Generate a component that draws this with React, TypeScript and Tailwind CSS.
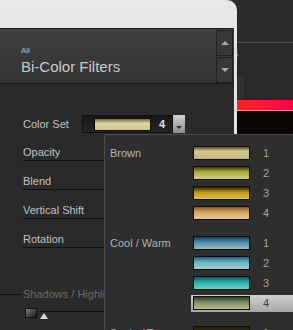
import { ReactNode } from "react";

// swatch gradients, one class string per colour set
const brown = [
  "bg-[linear-gradient(to_bottom,#5e4e28,#d6c894_35%,#c2b27e)]",
  "bg-[linear-gradient(to_bottom,#3e3e08,#a8a83a_40%,#d2d28c)]",
  "bg-[linear-gradient(to_bottom,#2e2000,#c29a18_45%,#d8c24a)]",
  "bg-[linear-gradient(to_bottom,#8a5a28,#d8a866_45%,#e6cc92)]",
];

const coolWarm = [
  "bg-[linear-gradient(to_bottom,#123e5c,#4e8eae_45%,#9cbcbc)]",
  "bg-[linear-gradient(to_bottom,#1e5e74,#6ab6c4_45%,#a6cccc)]",
  "bg-[linear-gradient(to_bottom,#065a5c,#2aaeae_45%,#6ecebe)]",
  "bg-[linear-gradient(to_bottom,#2e3a2e,#7e8e66_45%,#b6be8e)]",
];

const sepia = ["bg-[linear-gradient(to_bottom,#1e1e08,#4a4a1a)]"];

interface GroupProps {
  label: string;
  swatches: string[];
  selected?: number;
}

function Group({ label, swatches, selected }: GroupProps) {
  return (
    <div className="flex mb-[10px]">
      <div className="w-[86px] shrink-0 pl-[5px] pt-px text-[11px] leading-[14px] text-[#b4b4b4] whitespace-nowrap">
        {label}
      </div>
      <div className="flex-1 flex flex-col">
        {swatches.map((sw, i) => {
          const sel = selected === i;
          return (
            <div
              key={i}
              className={
                sel
                  ? "h-[17px] pt-px pl-[2px] mb-[3px] flex items-start bg-gradient-to-b from-[#d0d0d0] to-[#a6a6a6]"
                  : "h-[17px] pt-px pl-[2px] mb-[3px] flex items-start"
              }
            >
              <div className={`w-[57px] h-[14px] border border-[#0c0c0c] ${sw}`} />
              <span
                className={
                  sel
                    ? "ml-[13px] text-[11px] leading-[14px] text-[#3a3a3a]"
                    : "ml-[13px] text-[11px] leading-[14px] text-[#a8a8a8]"
                }
              >
                {i + 1}
              </span>
            </div>
          );
        })}
      </div>
    </div>
  );
}

function Row({ label, h, children }: { label: string; h: string; children?: ReactNode }) {
  return (
    <div className={`ml-[23px] w-[187px] ${h} border-b border-[#121212] flex items-end pb-px`}>
      <span className="text-[11px] leading-[14px] text-[#c2c2c2]">{label}</span>
      {children}
    </div>
  );
}

export default function App() {
  return (
    <div className="w-[293px] h-[330px] relative overflow-hidden bg-[#2b2b2b] flex font-['Liberation_Sans',Arial,sans-serif]">
      {/* left panel */}
      <div className="w-[237px] shrink-0 relative z-10 bg-gradient-to-b from-[#e8e8e8] to-[#d8d8d8] rounded-tr-[10px] pt-[28px] pr-[3px] flex flex-col">
        <div className="flex-1 bg-[#2a2a2a] flex flex-col">
          <div className="h-[56px] border-y border-[#1a1a1a] bg-gradient-to-b from-[#3f3f3f] to-[#343434] flex">
            <div className="flex-1 pl-[21px] pt-[17px] flex flex-col gap-[2px]">
              <span className="text-[8px] leading-[10px] text-[#bdbdbd]">All</span>
              <span className="text-[15px] leading-[17px] text-[#cacaca]">
                Bi-Color Filters
              </span>
            </div>
            <div className="w-[17px] mr-px pt-px flex flex-col gap-px">
              <div className="h-[26px] bg-[#373737] border border-[#202020] flex items-center justify-center">
                <div className="w-0 h-0 border-x-[4px] border-x-transparent border-b-[4px] border-b-[#a8a8a8]" />
              </div>
              <div className="h-[26px] bg-[#373737] border border-[#202020] flex items-center justify-center">
                <div className="w-0 h-0 border-x-[4px] border-x-transparent border-t-[4px] border-t-[#a8a8a8]" />
              </div>
            </div>
          </div>

          <div className="flex-1 pt-[31px] flex flex-col">
            <div className="h-[18px] flex items-center">
              <span className="w-[82px] pl-[23px] text-[11px] leading-[14px] text-[#c2c2c2]">
                Color Set
              </span>
              <div className="w-[91px] h-[18px] border border-[#101010] bg-gradient-to-b from-[#161616] to-[#262626] flex items-center">
                <div className="ml-[11px] w-[57px] h-[13px] border border-[#0c0c0c] bg-[linear-gradient(to_bottom,#7a6a38,#dcd4a2_40%,#cfc690)]" />
                <span className="ml-[8px] text-[11px] font-bold text-[#e2e2e2]">4</span>
              </div>
              <div className="w-[12px] h-[18px] bg-gradient-to-b from-[#cfcfcf] to-[#8e8e8e] flex items-end justify-center pb-[4px]">
                <div className="w-0 h-0 border-x-[3px] border-x-transparent border-t-[3px] border-t-[#303030]" />
              </div>
            </div>
            <Row label="Opacity" h="h-[28px]" />
            <Row label="Blend" h="h-[29px]" />
            <Row label="Vertical Shift" h="h-[29px]" />
            <Row label="Rotation" h="h-[29px]" />

            <div className="mt-[39px] flex items-center">
              <div className="w-[22px] h-px bg-[#111111]" />
              <span className="ml-px text-[11px] leading-[14px] text-[#6c6c6c] whitespace-nowrap">
                Shadows / Highlights
              </span>
            </div>
            <div className="mt-[7px] ml-[25px] flex items-start">
              <div className="w-[12px] h-[10px] border border-[#0e0e0e] bg-gradient-to-br from-[#7a7a7a] to-[#1e1e1e]" />
              <div className="flex-1 relative mt-[3px] ml-[3px] border-t border-[#0e0e0e]">
                <div className="absolute top-px left-0 w-0 h-0 border-x-[4px] border-x-transparent border-b-[6px] border-b-[#d8d8d8]" />
              </div>
            </div>
          </div>
        </div>
      </div>

      {/* right area, behind the panel */}
      <div className="flex-1 flex flex-col">
        <div className="h-[42px] bg-[#2c2c2c]" />
        <div className="h-px bg-[#4e4e4e]" />
        <div className="h-[57px] bg-[#2a2a2a] flex flex-col">
          <span className="-ml-[4px] mt-[6px] text-[9px] leading-[10px] text-[#b0b0b0]">5</span>
          <div className="mt-[18px] -ml-[1px] w-[8px] h-[21px] bg-[#323232]" />
        </div>
        <div className="h-[10px] bg-gradient-to-r from-[#ff2222] to-[#ff0048]" />
        <div className="h-px bg-[#ff8a8a]" />
        <div className="flex-1 bg-gradient-to-b from-[#050302] to-[#7e3c12]" />
      </div>

      {/* colour set menu */}
      <div className="absolute left-[104px] top-[134px] w-[200px] h-[210px] bg-[#2e2e2e] border-l border-t border-[#4a4a4a] pt-[10px] z-20">
        <Group label="Brown" swatches={brown} />
        <Group label="Cool / Warm" swatches={coolWarm} selected={3} />
        <Group label="Sepia / Tone" swatches={sepia} />
      </div>
    </div>
  );
}
